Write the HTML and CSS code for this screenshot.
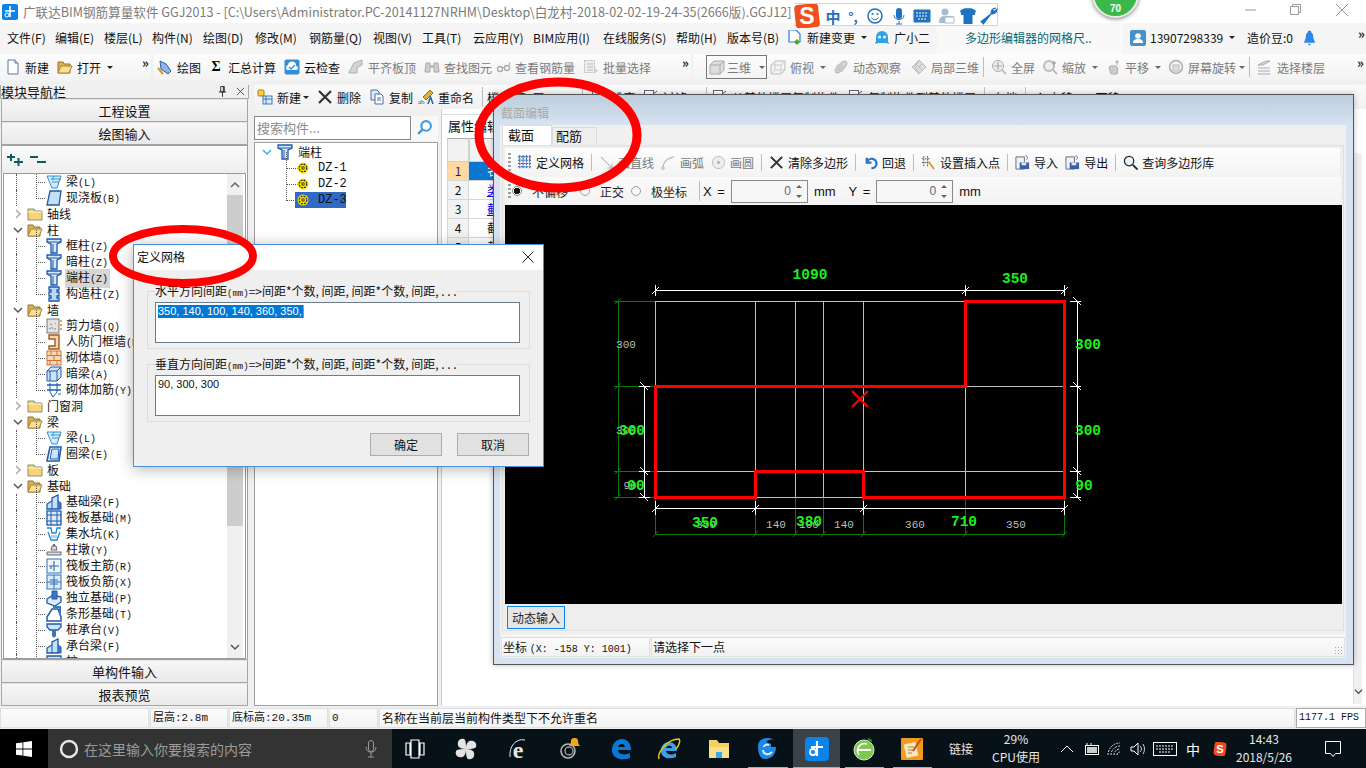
FILE: index.html
```html
<!DOCTYPE html>
<html lang="zh-CN">
<head>
<meta charset="utf-8">
<title>广联达BIM钢筋算量软件 GGJ2013</title>
<link rel="stylesheet" href="styles.css">
</head>
<body>
<svg class="sprite" aria-hidden="true">
  <symbol id="doc" viewBox="0 0 16 16"><path d="M3 1h7l3 3v11H3z" fill="#fff" stroke="#5a7796"/><path d="M10 1v3h3" fill="#dbe6f2" stroke="#5a7796"/></symbol>
  <symbol id="open" viewBox="0 0 16 16"><path d="M1 3h5l1 2h6v9H1z" fill="#d9b04d" stroke="#8f7430"/><path d="M4 7h11l-3 7H1z" fill="#f9df8e" stroke="#a58632"/></symbol>
  <symbol id="closed" viewBox="0 0 16 16"><path d="M1 3h6l1 2h7v9H1z" fill="#f5d576" stroke="#8c8a7c"/><path d="M1 6h14" stroke="#fff3c4"/></symbol>
  <symbol id="draw" viewBox="0 0 16 16"><path d="M3 2l6 3 5 7-3 3-7-5z" fill="#8fb6e6" stroke="#2a5da8"/><path d="M1 9l5 6" stroke="#d89a20" stroke-width="2"/></symbol>
  <symbol id="cloud" viewBox="0 0 16 16"><rect x=".5" y=".5" width="15" height="15" rx="2" fill="#2f8fd8"/><path d="M3 11a3 3 0 0 1 1-5 4 4 0 0 1 8 1 2 2 0 0 1 0 4z" fill="#fff"/><path d="M5 8l2 2 4-4" stroke="#2f8fd8" stroke-width="1.4" fill="none"/></symbol>
  <symbol id="g-align" viewBox="0 0 16 16"><path d="M1 13l5-9 8-3v5l-5 3v5H1z" fill="#d4d4d4" stroke="#b0b0b0"/></symbol>
  <symbol id="g-bino" viewBox="0 0 16 16"><path d="M2 4h4v9H1zM10 4h4l1 9h-5z" fill="#cfcfcf" stroke="#aaa"/><path d="M6 6h4v3H6z" fill="#bbb"/></symbol>
  <symbol id="g-glass" viewBox="0 0 16 16"><circle cx="5" cy="10" r="2.5" fill="none" stroke="#aaa" stroke-width="1.4"/><circle cx="12" cy="9" r="2.5" fill="none" stroke="#aaa" stroke-width="1.4"/><path d="M7 9l3-1M14 7l1-4" stroke="#aaa"/></symbol>
  <symbol id="g-select" viewBox="0 0 16 16"><rect x="1.500" y="1.500" width="10" height="12" fill="#eee" stroke="#bbb" stroke-dasharray="2 1"/><path d="M4 5h6M4 8h6M4 11h6" stroke="#bbb"/><path d="M11 8l4 4-2 1-1 2z" fill="#ccc"/></symbol>
  <symbol id="g-cube" viewBox="0 0 16 16"><path d="M1 6l4-4h10v9l-4 4H1z" fill="#ddd" stroke="#aaa"/><path d="M1 6h10v9M11 6l4-4" fill="none" stroke="#aaa"/></symbol>
  <symbol id="g-cube2" viewBox="0 0 16 16"><path d="M1 6l4-4h10v9l-4 4H1z" fill="#f4f4f4" stroke="#bbb"/><path d="M1 6h10v9M11 6l4-4M1 15l4-4h10M5 2v9" fill="none" stroke="#ccc"/></symbol>
  <symbol id="g-orbit" viewBox="0 0 16 16"><ellipse cx="8" cy="8" rx="7.500" ry="3" transform="rotate(-45 8 8)" fill="#d8d8d8" stroke="#bbb"/><circle cx="7" cy="9" r="4" fill="#c8c8c8"/></symbol>
  <symbol id="g-local" viewBox="0 0 16 16"><path d="M8 1l7 7-7 7-7-7z" fill="#ddd" stroke="#bbb"/><path d="M4 4l8 8M8 1l-4 7 4 7M12 4L8 8" stroke="#bbb" fill="none"/></symbol>
  <symbol id="g-full" viewBox="0 0 16 16"><circle cx="7" cy="7" r="5.500" fill="#eee" stroke="#aaa"/><path d="M7 3v8M3 7h8M11 11l4 4" stroke="#aaa" stroke-width="1.200"/></symbol>
  <symbol id="g-zoom" viewBox="0 0 16 16"><circle cx="7" cy="7" r="5" fill="#eee" stroke="#bbb" stroke-width="2"/><path d="M11 11l4 4M12 2v4M10 4h4" stroke="#aaa" stroke-width="1.500"/></symbol>
  <symbol id="g-pan" viewBox="0 0 16 16"><path d="M4 8l2-1 5 0 2 3-1 5H6z" fill="#ccc" stroke="#aaa"/><path d="M12 1v5M10 3h4" stroke="#aaa"/></symbol>
  <symbol id="g-rot" viewBox="0 0 16 16"><circle cx="8" cy="8" r="6.500" fill="#f2f2f2" stroke="#aaa" stroke-width="1.400"/><rect x="5" y="6" width="6" height="6" fill="#ddd" stroke="#bbb"/></symbol>
  <symbol id="g-floor" viewBox="0 0 16 16"><path d="M1 6l8-4h4L6 6zM1 9h12M1 12h12M1 15h12" fill="#ddd" stroke="#aaa"/></symbol>
  <symbol id="new2" viewBox="0 0 16 16"><rect x="1" y="1" width="6" height="6" rx="1" fill="#f7d03c" stroke="#a08018"/><rect x="6" y="7" width="9" height="8" fill="#dbe9f8" stroke="#3f78b8"/><path d="M6 10h9M9 7v8" stroke="#3f78b8"/></symbol>
  <symbol id="x" viewBox="0 0 16 16"><path d="M2 2l12 12M14 2L2 14" stroke="#333" stroke-width="2.200"/></symbol>
  <symbol id="copy" viewBox="0 0 16 16"><path d="M2 1h6l2 2v8H2z" fill="#dfe9f5" stroke="#4a6f9c"/><path d="M6 5h6l2 2v8H6z" fill="#fff" stroke="#4a6f9c"/><path d="M8 9h4M8 11h4" stroke="#4a6f9c"/></symbol>
  <symbol id="ren" viewBox="0 0 16 16"><path d="M5 8l7-7 3 3-7 7z" fill="#d8b23c" stroke="#8a7020"/><text x="0" y="15" font-size="7" font-family="Liberation Serif" fill="#444">ab</text><path d="M10 15l2.500-7 2.500 7" stroke="#2a5da8" fill="none" stroke-width="1.500"/></symbol>
  <symbol id="copyto" viewBox="0 0 16 16"><rect x="1.500" y="1.500" width="9" height="12" fill="#fff" stroke="#667"/><path d="M9 6l5-4M11 8l4-2" stroke="#2a5da8"/></symbol>
  <symbol id="newchg" viewBox="0 0 16 16"><path d="M2 0h7l4 4v8H2z" fill="#fff" stroke="#2f7fcf" stroke-width="1.200"/><path d="M10 9l3 3-3 3-3-3z" fill="#5aa02c"/></symbol>
  <symbol id="robot" viewBox="0 0 16 16"><path d="M2 7a6 6 0 0 1 12 0v4l1 3-3-1H4l-3 1 1-3z" fill="#2aa3e8"/><circle cx="5.500" cy="7" r="1.500" fill="#fff"/><circle cx="10.500" cy="7" r="1.500" fill="#fff"/></symbol>
  <symbol id="user" viewBox="0 0 16 16"><rect width="16" height="16" rx="2" fill="#4a90c8"/><circle cx="8" cy="6" r="2.800" fill="#fff"/><path d="M3 13c0-3 2-4 5-4s5 1 5 4z" fill="#fff"/></symbol>
  <symbol id="bell" viewBox="0 0 16 16"><path d="M8 0a2 2 0 0 1 2 2c2 1 2 4 2 6l2 5H2l2-5c0-2 0-5 2-6a2 2 0 0 1 2-2zM6 14h4l-2 2z" fill="#2f86e8"/></symbol>
  <symbol id="col" viewBox="0 0 16 16"><path d="M1 1h14v3l-4 2v9H5V6L1 4z" fill="#d5e8fa" stroke="#1c5ab0" stroke-width="1.300"/><path d="M1 4h14M7 6v9" stroke="#1c5ab0"/></symbol>
  <symbol id="beam" viewBox="0 0 16 16"><path d="M1 2l5 12h5l4-12z" fill="#d5ebfb" stroke="#2f8fd8"/><path d="M5 5h10M6 8h7M8 2l-2 4" stroke="#2f8fd8"/></symbol>
  <symbol id="slab" viewBox="0 0 16 16"><path d="M4 1h11l-2 14H1z" fill="#c5dff7" stroke="#1c5ab0" stroke-width="1.300"/></symbol>
  <symbol id="ringb" viewBox="0 0 16 16"><path d="M4 1h11l-2 14H1z" fill="#fff" stroke="#1c5ab0" stroke-width="1.600"/><path d="M6 3h7l-1 10H4z" fill="#cfe4f8" stroke="#1c5ab0"/></symbol>
  <symbol id="puzzle" viewBox="0 0 16 16"><path d="M3 1h10v3h-2v2h2v4h-2v2h2v3H3v-3h2v-2H3V6h2V4H3z" fill="#bcd7f4" stroke="#1c5ab0" stroke-width="1.300"/></symbol>
  <symbol id="shear" viewBox="0 0 16 16"><rect x="1" y="1" width="12" height="14" fill="#e2e2e2" stroke="#777"/><path d="M3 11l2-1M6 9l1 2M8 12l2-2M4 6l2 1M9 5l1 1" stroke="#888"/><path d="M14 3h2M14 7h2M14 11h2" stroke="#e08020" stroke-width="1.500"/></symbol>
  <symbol id="door" viewBox="0 0 16 16"><path d="M3 1h10v14H3v-3h6V5H3z" fill="#f6d7b0" stroke="#a35a20" stroke-width="1.400"/></symbol>
  <symbol id="brick" viewBox="0 0 16 16"><rect x="1" y="1" width="14" height="14" fill="#f8d8b8" stroke="#c8763a"/><path d="M1 5.500h14M1 10.500h14M5 1v4.500M11 1v4.500M8 5.500v5M4 10.500V15M11 10.500V15" stroke="#c8763a"/></symbol>
  <symbol id="dbeam" viewBox="0 0 16 16"><path d="M1 5l4-4h10v10l-4 4H1z" fill="#cfe3f7" stroke="#1c5ab0"/><path d="M1 5h10v10M11 5l4-4M4 5v10" fill="none" stroke="#1c5ab0"/></symbol>
  <symbol id="rebar" viewBox="0 0 16 16"><path d="M1 3h14M1 8h14" stroke="#1c5ab0" stroke-width="1.400"/><path d="M4 1v9l3 5M11 1v9l-4 5" stroke="#1c5ab0" fill="none"/><path d="M12 12h3" stroke="#1c5ab0"/></symbol>
  <symbol id="fbeam" viewBox="0 0 16 16"><path d="M1 15V10l5-3V4l6-3v14z" fill="#c5dff7" stroke="#1c5ab0" stroke-width="1.300"/><path d="M6 7v8M12 7l3 2v6h-3" fill="#3f78b8" stroke="#1c5ab0"/></symbol>
  <symbol id="raft" viewBox="0 0 16 16"><rect x="1" y="1" width="14" height="14" fill="#dcebfa" stroke="#1c5ab0" stroke-width="1.300"/><path d="M1 5h14M1 11h14M5 1v14M11 1v14" stroke="#1c5ab0"/></symbol>
  <symbol id="pit" viewBox="0 0 16 16"><path d="M1 2h4l1 5h4l1-5h4M2 6l3 8h6l3-8" fill="none" stroke="#1c8ad8" stroke-width="1.300"/><path d="M5 9h6v3H5z" fill="#a8d4f4"/></symbol>
  <symbol id="pier" viewBox="0 0 16 16"><path d="M6 4h4l1 4H5zM1 10h14v3H1z" fill="#ddd" stroke="#667"/><path d="M7 2h2v2H7z" fill="#667"/></symbol>
  <symbol id="rbar1" viewBox="0 0 16 16"><rect x="1" y="1" width="14" height="14" fill="#f0f6fc" stroke="#2f6fb8"/><path d="M8 3v10M3 8h10M5 11V8" stroke="#2f6fb8" stroke-width="1.200" fill="none"/></symbol>
  <symbol id="rbar2" viewBox="0 0 16 16"><rect x="1" y="1" width="14" height="14" fill="#dcebfa" stroke="#2f6fb8"/><path d="M1 8h14M8 1v14M4 6h8M4 10h8" stroke="#2f6fb8"/></symbol>
  <symbol id="iso" viewBox="0 0 16 16"><path d="M1 9l6-4 8 2v5l-6 4-8-3z" fill="#dcebfa" stroke="#1c5ab0" stroke-width="1.300"/><path d="M6 1h5v8H6z" fill="#3f78b8" stroke="#1c5ab0"/></symbol>
  <symbol id="strip" viewBox="0 0 16 16"><path d="M1 15v-4l5-8h6l3 8v4z" fill="#fff" stroke="#1c5ab0" stroke-width="1.500"/><path d="M7 1h7v8" fill="none" stroke="#3f78b8" stroke-width="2"/></symbol>
  <symbol id="cap" viewBox="0 0 16 16"><path d="M1 2h14v3l-3 3H4L1 5z" fill="#cfe3f7" stroke="#1c5ab0" stroke-width="1.300"/><path d="M6 8h4v6l-2 2-2-2z" fill="#3f78b8"/></symbol>
  <symbol id="gear" viewBox="0 0 12 12"><circle cx="6" cy="6" r="5.500" fill="#ffe800"/><circle cx="6" cy="6" r="3.800" fill="none" stroke="#333" stroke-width="1.300" stroke-dasharray="2 1"/><circle cx="6" cy="6" r="1.800" fill="#333"/><circle cx="6" cy="6" r=".8" fill="#ffe800"/></symbol>
  <symbol id="grid" viewBox="0 0 16 16"><path d="M1 2h14M1 5.500h14M1 9h14M1 12.500h14M3 0v15M6.500 0v15M10 0v15M13.500 0v15" stroke="#2a5bb0" stroke-width="1.100" stroke-dasharray="2 1"/></symbol>
  <symbol id="gline" viewBox="0 0 16 16"><path d="M2 2l12 12M14 9v5H9" fill="none" stroke="#bbb" stroke-width="1.300"/></symbol>
  <symbol id="garc" viewBox="0 0 16 16"><path d="M2 13C3 6 8 3 14 2" fill="none" stroke="#bbb" stroke-width="1.300"/><circle cx="2" cy="14" r="1.500" fill="#ddd" stroke="#bbb"/></symbol>
  <symbol id="gcirc" viewBox="0 0 16 16"><circle cx="8" cy="8" r="6.500" fill="#eee" stroke="#bbb"/><circle cx="8" cy="8" r="1.500" fill="#aaa"/></symbol>
  <symbol id="undo" viewBox="0 0 16 16"><path d="M4 3v5h5M4.500 8A5 5 0 1 1 9 14" fill="none" stroke="#2a72c8" stroke-width="2.400"/></symbol>
  <symbol id="insert" viewBox="0 0 16 16"><path d="M1 4h9M1 8h9M3 1v11M7 1v11" stroke="#555" stroke-dasharray="2 1"/><path d="M8 7l6 8" stroke="#d8a030" stroke-width="2"/></symbol>
  <symbol id="imp" viewBox="0 0 16 16"><path d="M1 2h9v13H1z" fill="#eef3fa" stroke="#667"/><rect x="5" y="8" width="10" height="7" fill="#3c5da8"/><rect x="7" y="8" width="5" height="3" fill="#dfe8f5"/><path d="M11 1c3 0 3 3 1 4" fill="none" stroke="#4a6f9c"/></symbol>
  <symbol id="search" viewBox="0 0 16 16"><circle cx="6.500" cy="6.500" r="5" fill="#eaf5fc" stroke="#222" stroke-width="1.300"/><path d="M10.500 10.500l5 5" stroke="#222" stroke-width="2"/></symbol>
  <symbol id="plusm" viewBox="0 0 18 14"><path d="M1 4h8M5 1v7M8 9h9M12.500 5v8" stroke="#0f5c5c" stroke-width="2"/></symbol>
  <symbol id="minusm" viewBox="0 0 18 14"><path d="M1 4h8M8 9h9" stroke="#0f5c5c" stroke-width="2"/></symbol>
  <symbol id="chevr" viewBox="0 0 10 10"><path d="M3 1l4 4-4 4" fill="none" stroke="#aaa" stroke-width="1.500"/></symbol>
  <symbol id="chevd" viewBox="0 0 10 10"><path d="M1 3l4 4 4-4" fill="none" stroke="#555" stroke-width="1.500"/></symbol>
  <symbol id="chevdb" viewBox="0 0 10 10"><path d="M1 3l4 4 4-4" fill="none" stroke="#2ab4f0" stroke-width="1.500"/></symbol>
  <symbol id="chevu" viewBox="0 0 10 10"><path d="M1 7l4-4 4 4" fill="none" stroke="#666" stroke-width="1.500"/></symbol>
</svg>

<div class="app">
  <header class="title">
    <svg class="appicon" viewBox="0 0 16 16"><rect width="16" height="16" rx="2" fill="#0a84e8"/><path d="M8 2v11M3 7h10" stroke="#fff" stroke-width="1.600"/><circle cx="5" cy="11" r="2" fill="none" stroke="#fff"/></svg>
    <span class="title-text">广联达BIM钢筋算量软件 GGJ2013 - [C:\Users\Administrator.PC-20141127NRHM\Desktop\白龙村-2018-02-02-19-24-35(2666版).GGJ12]</span>
    <svg class="winctl" viewBox="0 0 120 14"><path d="M0 7h11" stroke="#9a9a9a"/><path d="M45.500 3.500h8v8h-8zM47.500 3.500v-2h8v8h-2" fill="none" stroke="#9a9a9a"/><path d="M91 1l12 12M103 1L91 13" stroke="#9a9a9a"/></svg>
  </header>

  <nav class="menu">
    <span>文件(F)</span><span>编辑(E)</span><span>楼层(L)</span><span>构件(N)</span><span>绘图(D)</span><span>修改(M)</span><span>钢筋量(Q)</span><span>视图(V)</span><span>工具(T)</span><span>云应用(Y)</span><span>BIM应用(I)</span><span>在线服务(S)</span><span>帮助(H)</span><span>版本号(B)</span>
    <span class="mi"><svg class="i"><use href="#newchg"/></svg>新建变更<b class="caret"></b></span>
    <span class="mi"><svg class="i"><use href="#robot"/></svg>广小二</span>
    <span class="hint">多边形编辑器的网格尺..</span>
    <span class="mi phone"><svg class="i"><use href="#user"/></svg>13907298339<b class="caret"></b></span>
    <span class="mi"><span>造价豆:0</span><svg class="i bell"><use href="#bell"/></svg></span>
    <span class="more">»</span>
  </nav>

  <div class="tools">
    <div class="tgroup g1">
      <span class="it"><svg class="i"><use href="#doc"/></svg>新建</span>
      <span class="it"><svg class="i"><use href="#open"/></svg>打开<b class="caret"></b></span>
      <span class="more push">»</span>
    </div>
    <div class="tgroup g2">
      <span class="it"><svg class="i"><use href="#draw"/></svg>绘图</span>
      <span class="it"><b class="sigma">Σ</b>汇总计算</span>
      <span class="it"><svg class="i"><use href="#cloud"/></svg>云检查</span>
      <span class="it dim"><svg class="i"><use href="#g-align"/></svg>平齐板顶</span>
      <span class="it dim"><svg class="i"><use href="#g-bino"/></svg>查找图元</span>
      <span class="it dim lift"><svg class="i"><use href="#g-glass"/></svg>查看钢筋量</span>
      <span class="it dim"><svg class="i"><use href="#g-select"/></svg>批量选择</span>
      <span class="more push">»</span>
    </div>
    <div class="tgroup g3">
      <span class="it dim box3d"><svg class="i"><use href="#g-cube"/></svg>三维<b class="caret"></b></span>
      <span class="it dim"><svg class="i"><use href="#g-cube2"/></svg>俯视<b class="caret"></b></span>
      <span class="it dim"><svg class="i"><use href="#g-orbit"/></svg>动态观察</span>
      <span class="it dim nudge"><svg class="i"><use href="#g-local"/></svg>局部三维</span>
      <i class="sep"></i>
      <span class="it dim"><svg class="i"><use href="#g-full"/></svg>全屏</span>
      <span class="it dim"><svg class="i"><use href="#g-zoom"/></svg>缩放<b class="caret"></b></span>
      <span class="it dim"><svg class="i"><use href="#g-pan"/></svg>平移<b class="caret"></b></span>
      <span class="it dim"><svg class="i"><use href="#g-rot"/></svg>屏幕旋转<b class="caret tight"></b></span>
      <i class="sep"></i>
      <span class="it dim"><svg class="i"><use href="#g-floor"/></svg>选择楼层</span>
      <span class="more push">»</span>
    </div>
  </div>

  <main class="work">
    <aside class="nav">
      <div class="nav-head"><span>模块导航栏</span>
        <svg class="pin" viewBox="0 0 10 12"><path d="M3 .5h4v6H3zM1 6.500h8M5 7v5M6 1v5" fill="none" stroke="#222"/></svg>
        <svg class="nav-x" viewBox="0 0 10 10"><path d="M1 1l8 8M9 1L1 9" stroke="#444"/></svg>
      </div>
      <div class="navbtn">工程设置</div>
      <div class="navbtn">绘图输入</div>
      <div class="treewrap">
        <div class="treetool"><svg class="pm"><use href="#plusm"/></svg><svg class="pm"><use href="#minusm"/></svg></div>
        <div class="tree">
          <div class="treerows">
            <div class="row c"><svg class="i"><use href="#beam"/></svg><span>梁<i>(L)</i></span></div>
            <div class="row c last"><svg class="i"><use href="#slab"/></svg><span>现浇板<i>(B)</i></span></div>
            <div class="row f"><svg class="ch"><use href="#chevr"/></svg><svg class="i"><use href="#closed"/></svg><span>轴线</span></div>
            <div class="row f"><svg class="ch"><use href="#chevd"/></svg><svg class="i"><use href="#open"/></svg><span>柱</span></div>
            <div class="row c"><svg class="i"><use href="#col"/></svg><span>框柱<i>(Z)</i></span></div>
            <div class="row c"><svg class="i"><use href="#col"/></svg><span>暗柱<i>(Z)</i></span></div>
            <div class="row c"><svg class="i"><use href="#col"/></svg><span class="sel">端柱<i>(Z)</i></span></div>
            <div class="row c last"><svg class="i"><use href="#puzzle"/></svg><span>构造柱<i>(Z)</i></span></div>
            <div class="row f"><svg class="ch"><use href="#chevd"/></svg><svg class="i"><use href="#open"/></svg><span>墙</span></div>
            <div class="row c"><svg class="i"><use href="#shear"/></svg><span>剪力墙<i>(Q)</i></span></div>
            <div class="row c"><svg class="i"><use href="#door"/></svg><span>人防门框墙<i>(R)</i></span></div>
            <div class="row c"><svg class="i"><use href="#brick"/></svg><span>砌体墙<i>(Q)</i></span></div>
            <div class="row c"><svg class="i"><use href="#dbeam"/></svg><span>暗梁<i>(A)</i></span></div>
            <div class="row c last"><svg class="i"><use href="#rebar"/></svg><span>砌体加筋<i>(Y)</i></span></div>
            <div class="row f"><svg class="ch"><use href="#chevr"/></svg><svg class="i"><use href="#closed"/></svg><span>门窗洞</span></div>
            <div class="row f"><svg class="ch"><use href="#chevd"/></svg><svg class="i"><use href="#open"/></svg><span>梁</span></div>
            <div class="row c"><svg class="i"><use href="#beam"/></svg><span>梁<i>(L)</i></span></div>
            <div class="row c last"><svg class="i"><use href="#ringb"/></svg><span>圈梁<i>(E)</i></span></div>
            <div class="row f"><svg class="ch"><use href="#chevr"/></svg><svg class="i"><use href="#closed"/></svg><span>板</span></div>
            <div class="row f"><svg class="ch"><use href="#chevd"/></svg><svg class="i"><use href="#open"/></svg><span>基础</span></div>
            <div class="row c"><svg class="i"><use href="#fbeam"/></svg><span>基础梁<i>(F)</i></span></div>
            <div class="row c"><svg class="i"><use href="#raft"/></svg><span>筏板基础<i>(M)</i></span></div>
            <div class="row c"><svg class="i"><use href="#pit"/></svg><span>集水坑<i>(K)</i></span></div>
            <div class="row c"><svg class="i"><use href="#pier"/></svg><span>柱墩<i>(Y)</i></span></div>
            <div class="row c"><svg class="i"><use href="#rbar1"/></svg><span>筏板主筋<i>(R)</i></span></div>
            <div class="row c"><svg class="i"><use href="#rbar2"/></svg><span>筏板负筋<i>(X)</i></span></div>
            <div class="row c"><svg class="i"><use href="#iso"/></svg><span>独立基础<i>(P)</i></span></div>
            <div class="row c"><svg class="i"><use href="#strip"/></svg><span>条形基础<i>(T)</i></span></div>
            <div class="row c"><svg class="i"><use href="#cap"/></svg><span>桩承台<i>(V)</i></span></div>
            <div class="row c"><svg class="i"><use href="#fbeam"/></svg><span>承台梁<i>(F)</i></span></div>
            <div class="row c"><svg class="i"><use href="#cap"/></svg><span>桩<i>(U)</i></span></div>
          </div>
          <div class="vscroll">
            <svg class="ar"><use href="#chevu"/></svg>
            <div class="vtrack"><div class="vthumb"></div></div>
            <svg class="ar"><use href="#chevd"/></svg>
          </div>
        </div>
      </div>
      <div class="navbtn">单构件输入</div>
      <div class="navbtn">报表预览</div>
    </aside>

    <div class="pane">
      <div class="ctool">
        <span class="it"><svg class="i"><use href="#new2"/></svg>新建<b class="caret"></b></span>
        <span class="it"><svg class="i"><use href="#x"/></svg>删除</span>
        <span class="it"><svg class="i"><use href="#copy"/></svg>复制</span>
        <span class="it rename"><svg class="i"><use href="#ren"/></svg>重命名</span>
        <i class="sep"></i>
        <span class="it floor">楼层 第2层</span>
        <i class="sep"></i>
        <span class="it"><svg class="i"><use href="#copyto"/></svg>排序</span>
        <span class="it"><svg class="i"><use href="#copyto"/></svg>过滤</span>
        <i class="sep later"></i>
        <span class="it"><svg class="i"><use href="#copyto"/></svg>从其他楼层复制构件</span>
        <span class="it"><svg class="i"><use href="#copyto"/></svg>复制构件到其他楼层</span>
        <i class="sep"></i>
        <span class="it">存档</span>
        <i class="sep"></i>
        <span class="it">▲ 上移</span>
        <span class="it">▼ 下移</span>
      </div>
      <div class="panes">
        <section class="mid">
          <div class="searchrow">
            <div class="searchbox">搜索构件...</div>
            <svg class="searchbtn" viewBox="0 0 16 16"><circle cx="9.500" cy="6.500" r="4.500" fill="#fff" stroke="#3f9be0" stroke-width="2"/><path d="M6 10l-4 4" stroke="#3f9be0" stroke-width="2.400"/></svg>
          </div>
          <div class="ctree">
            <div class="croot"><svg class="ch"><use href="#chevdb"/></svg><svg class="i"><use href="#col"/></svg><span>端柱</span></div>
            <div class="cnode"><svg class="gear"><use href="#gear"/></svg><span>DZ-1</span></div>
            <div class="cnode"><svg class="gear"><use href="#gear"/></svg><span>DZ-2</span></div>
            <div class="cnode on"><svg class="gear"><use href="#gear"/></svg><span>DZ-3</span></div>
          </div>
        </section>
        <section class="props">
          <div class="ptab">属性编辑</div>
          <div class="ptable">
            <div class="phead"><span></span><span></span></div>
            <div class="prow cur"><span>1</span><span>名称</span></div>
            <div class="prow link"><span>2</span><span>类别</span></div>
            <div class="prow link"><span>3</span><span>截面编辑</span></div>
            <div class="prow"><span>4</span><span>截面形状</span></div>
            <div class="prow"><span>5</span><span>截面宽</span></div>
          </div>
          <div class="pscroll"><svg class="ar"><use href="#chevd"/></svg></div>
        </section>
      </div>
    </div>
  </main>

  <footer class="status">
    <span class="s0"></span><span class="s1">层高:2.8m</span><span class="s2">底标高:20.35m</span><span class="s3">0</span><span class="s4">名称在当前层当前构件类型下不允许重名</span><span class="s5">1177.1 FPS</span>
  </footer>

  <div class="taskbar">
    <div class="start"><svg viewBox="0 0 16 16"><path d="M0 2.300l6.500-.9v6.200H0zM7.300 1.300L16 0v7.600H7.300zM0 8.400h6.500v6.200L0 13.700zM7.300 8.400H16V16l-8.700-1.200z" fill="#fff"/></svg></div>
    <div class="tsearch">
      <svg class="ring" viewBox="0 0 20 20"><circle cx="10" cy="10" r="8" fill="none" stroke="#e8e8e8" stroke-width="2.400"/></svg>
      <span>在这里输入你要搜索的内容</span>
      <svg class="tmic" viewBox="0 0 12 18"><rect x="3.500" y=".5" width="5" height="11" rx="2.500" fill="none" stroke="#999"/><path d="M1 7c0 7 10 7 10 0M6 13v4M3 17h6" fill="none" stroke="#999"/></svg>
    </div>
    <div class="apps">
      <span class="app-s"><svg viewBox="0 0 24 20"><path d="M8 1h8v18H8zM3 4h4v12H3zM17 4h4v12h-4z" fill="none" stroke="#fff" stroke-width="1.200"/></svg></span>
      <span class="app-s"><svg viewBox="0 0 24 24"><path d="M12 12C5 12 3 9 4 5s6-4 7-2 1 6 1 9zM12 12c0-7 3-9 7-8s4 6 2 7-6 1-9 1zM12 12c7 0 9 3 8 7s-6 4-7 2-1-6-1-9zM12 12c0 7-3 9-7 8s-4-6-2-7 6-1 9-1z" fill="#e4e4e4"/></svg></span>
      <span class="app-s"><svg viewBox="0 0 24 24"><text x="12" y="21" font-size="24" font-family="Liberation Serif" font-weight="700" text-anchor="middle" fill="#e6e6e6">e</text><path d="M19 3C10 1 3 9 4 20" fill="none" stroke="#e6e6e6"/></svg></span>
      <span class="app-s"><svg viewBox="0 0 24 24"><circle cx="10" cy="14" r="7" fill="none" stroke="#bbb" stroke-width="1.500"/><circle cx="11" cy="14" r="4" fill="none" stroke="#999" stroke-width="1.500"/><path d="M17 1a3 3 0 0 1 3 3c0 2 1 4 2 5h-11c1-1 2-3 2-5a3 3 0 0 1 3-3z" fill="#f0a818"/></svg></span>
      <span class="app-s"><svg viewBox="0 0 24 24"><path d="M3 13C3 6 8 2 13 2s9 4 9 11H9c0 4 6 6 12 3v5c-8 3-18 1-18-8zm6-3h7c0-4-6-4-7 0z" fill="#0a78d8"/></svg></span>
      <span class="app-s"><svg viewBox="0 0 24 24"><path d="M4 14C4 8 8 5 12 5s8 3 8 9H9c0 3 5 5 10 2v4c-7 3-15 1-15-6zm5-3h6c0-3-5-3-6 0z" fill="#3aa0e8"/><path d="M2 22C0 16 10 2 22 2c2 2-1 8-3 10" fill="none" stroke="#f0c020" stroke-width="1.500"/></svg></span>
      <span class="app-s run fold"><svg viewBox="0 0 24 24"><path d="M2 3h8l2 3h10v15H2z" fill="#f5d060"/><path d="M2 10h20v11H2z" fill="#f9e08c"/><path d="M9 21v-6h6v6z" fill="#3aa8e8"/></svg></span>
      <span class="app-s run gapp"><svg viewBox="0 0 24 24"><path d="M3 10C3 3 8 1 13 1c3 0 5 1 6 2-3-1-6 0-8 2l5 2v3h5c0 7-4 12-11 12-5 0-7-6-7-12z" fill="#1c88e8"/><path d="M9 10c0-2 3-3 5-2M8 13c0 4 5 6 9 2" stroke="#d8ecfc" stroke-width="2" fill="none"/></svg></span>
      <span class="app-s run cur"><svg viewBox="0 0 24 24"><rect width="24" height="24" rx="4" fill="#0a84e8"/><path d="M12 4v15M6 10h12" stroke="#fff" stroke-width="2.200"/><circle cx="8" cy="15" r="3" fill="none" stroke="#fff" stroke-width="1.800"/></svg></span>
      <span class="app-s run"><svg viewBox="0 0 24 24"><circle cx="12" cy="13" r="10" fill="#7ec850" stroke="#d8ecc8"/><path d="M5 13h14" stroke="#fff" stroke-width="2"/><path d="M7 18C3 12 8 5 15 7" fill="none" stroke="#fff" stroke-width="1.500"/><path d="M16 2l4 2" stroke="#3a7a20" stroke-width="2"/></svg></span>
      <span class="app-s run"><svg viewBox="0 0 24 24"><rect x="1" y="1" width="22" height="22" rx="1" fill="#f09a20"/><rect x="5" y="6" width="12" height="14" fill="#f8e8c0" transform="rotate(-12 11 13)"/><path d="M8 10h6M8 13h6M8 16h4" stroke="#b08030"/><path d="M21 2L13 14" stroke="#c8501c" stroke-width="2"/></svg></span>
    </div>
    <span class="tray-t link">链接</span>
    <span class="tray-t cpu"><span>29%</span><span>CPU使用</span></span>
    <div class="tray">
      <svg viewBox="0 0 14 14"><path d="M1 10l6-6 6 6" fill="none" stroke="#fff"/></svg>
      <svg viewBox="0 0 16 14"><rect x="1.500" y="3.500" width="13" height="9" fill="none" stroke="#fff"/><rect x="3" y="5" width="10" height="6" fill="#ccc"/><path d="M3 1v3M7 1v3" stroke="#fff"/></svg>
      <svg viewBox="0 0 16 14"><path d="M1 13a12 12 0 0 1 12-12M4 13a9 9 0 0 1 9-9M7 13a6 6 0 0 1 6-6M10 13a3 3 0 0 1 3-3" fill="none" stroke="#ddd" stroke-dasharray="2 1"/></svg>
      <svg viewBox="0 0 16 14"><path d="M1 5h3l4-4v12L4 9H1z" fill="none" stroke="#fff"/><path d="M10 4c2 2 2 4 0 6M13 2c2 3 2 7 0 10" fill="none" stroke="#ccc"/></svg>
      <svg class="kb" viewBox="0 0 24 14"><rect x=".5" y=".5" width="23" height="13" fill="none" stroke="#fff"/><path d="M3 4h18M3 7h18M6 10h12" stroke="#fff" stroke-dasharray="2 1"/></svg>
      <span class="ime">中</span>
      <svg viewBox="0 0 14 14"><rect x="1" y="0" width="12" height="14" rx="3" fill="#f04a20" transform="rotate(8 7 7)"/><text x="7" y="11" font-size="11" font-weight="700" font-family="Liberation Sans" text-anchor="middle" fill="#fff">S</text></svg>
    </div>
    <span class="tray-t clock"><span>14:43</span><span>2018/5/26</span></span>
    <svg class="notify" viewBox="0 0 18 18"><path d="M1.500 1.500h15v12h-5l-2.500 3-2.500-3h-5z" fill="none" stroke="#fff"/></svg>
  </div>

  <section class="editor">
    <div class="ed-title">截面编辑</div>
    <div class="ed-body">
      <div class="ed-tabs"><span class="tab on">截面</span><span class="tab">配筋</span></div>
      <div class="ed-pane">
        <div class="ed-tool">
          <b class="grip"></b>
          <span class="it"><svg class="i"><use href="#grid"/></svg>定义网格</span><i class="sep"></i>
          <span class="it dim"><svg class="i"><use href="#gline"/></svg>画直线</span>
          <span class="it dim"><svg class="i"><use href="#garc"/></svg>画弧</span>
          <span class="it dim"><svg class="i"><use href="#gcirc"/></svg>画圆</span><i class="sep"></i>
          <span class="it"><svg class="i"><use href="#x"/></svg>清除多边形</span><i class="sep"></i>
          <span class="it"><svg class="i"><use href="#undo"/></svg>回退</span><i class="sep"></i>
          <span class="it"><svg class="i"><use href="#insert"/></svg>设置插入点</span><i class="sep"></i>
          <span class="it"><svg class="i"><use href="#imp"/></svg>导入</span>
          <span class="it"><svg class="i"><use href="#imp"/></svg>导出</span><i class="sep"></i>
          <span class="it"><svg class="i"><use href="#search"/></svg>查询多边形库</span>
        </div>
        <div class="ed-coord">
          <b class="grip short"></b>
          <span class="rad on"></span><span class="rl first">不偏移</span>
          <span class="rad"></span><span class="rl">正交</span>
          <span class="rad"></span><span class="rl">极坐标</span>
          <i class="sep"></i>
          <span class="lbl">X =</span>
          <span class="num">0<b class="spin"></b></span>
          <span class="lbl mm">mm</span>
          <span class="lbl yy">Y =</span>
          <span class="num">0<b class="spin"></b></span>
          <span class="lbl mm">mm</span>
        </div>
        <svg class="canvas" viewBox="505 205 837 399">
          <g class="gridl">
            <path d="M655 301.500h410M655 386.500h410M655 471.500h410M655 497.500h410M655.500 301v197M755.500 301v197M795.500 301v197M823.500 301v197M863.500 301v197M965.500 301v197M1064.500 301v197"/>
          </g>
          <g class="dg">
            <path d="M618.500 301v197M614 301.500h41M614 386.500h41M614 471.500h41M614 497.500h41"/>
            <path d="M655.500 498v37M755.500 498v37M795.500 498v37M823.500 498v37M863.500 498v37M965.500 498v37M1064.500 498v37M655 534.500h410"/>
            <path d="M653 537l5-6M753 537l5-6M793 537l5-6M821 537l5-6M861 537l5-6M963 537l5-6M1062 537l5-6M615 304l6-6M615 389l6-6M615 474l6-6M615 500l6-6"/>
          </g>
          <g class="wh">
            <path d="M655 290.500h410M655.500 285v11M965.500 285v11M1064.500 285v11M652 294l7-7M962 294l7-7M1061 294l7-7"/>
            <path d="M655 508.500h410M655.500 501v14M755.500 501v14M863.500 501v14M1064.500 501v14M652 512l7-7M752 512l7-7M860 512l7-7M1061 512l7-7"/>
            <path d="M644.500 386v112M639 386.500h11M639 471.500h11M639 497.500h11M640 382l8 8M640 467l8 8M640 493l8 8"/>
            <path d="M1077.500 301v197M1070 301.500h11M1070 386.500h11M1070 471.500h11M1070 497.500h11M1073 297l8 8M1073 382l8 8M1073 467l8 8M1073 493l8 8"/>
          </g>
          <path class="poly" d="M965.500 386.500V301.500H1064.500V497.500H863.500V471.500H755.500V497.500H655.500V386.500Z"/>
          <path class="cross" d="M852 391l16 16M868 391l-16 16"/>
          <g class="gt">
            <text x="626" y="348">300</text><text x="626" y="434">300</text><text x="630" y="489">90</text>
            <text x="706" y="528">350</text><text x="776" y="528">140</text><text x="809" y="528">100</text><text x="844" y="528">140</text><text x="915" y="528">360</text><text x="1016" y="528">350</text>
          </g>
          <g class="lt">
            <text x="810" y="279">1090</text><text x="1015" y="283">350</text>
            <text x="1088" y="349">300</text><text x="1088" y="435">300</text><text x="1084" y="490">90</text>
            <text x="632" y="435">300</text><text x="636" y="490">90</text>
            <text x="705" y="527">350</text><text x="809" y="526">380</text><text x="964" y="526">710</text>
          </g>
        </svg>
        <div class="ed-dyn"><span class="dyn">动态输入</span></div>
      </div>
      <div class="ed-status"><span class="coord">坐标 <i>(X: -158 Y: 1001)</i></span><span class="tip">请选择下一点</span></div>
    </div>
  </section>

  <section class="dlg">
    <div class="dlg-title"><span>定义网格</span><svg viewBox="0 0 12 12"><path d="M.5.5l11 11M11.500.5l-11 11" stroke="#222"/></svg></div>
    <div class="dlg-body">
      <fieldset class="grp">
        <legend>水平方向间距<small>(mm)</small>=&gt;间距*个数, 间距, 间距*个数, 间距, . . .</legend>
        <div class="ta sel-ta"><span class="selt">350, 140, 100, 140, 360, 350,</span><b class="cur-o"></b></div>
      </fieldset>
      <fieldset class="grp">
        <legend>垂直方向间距<small>(mm)</small>=&gt;间距*个数, 间距, 间距*个数, 间距, . . .</legend>
        <div class="ta">90, 300, 300</div>
      </fieldset>
      <div class="dlg-btns"><span class="btn">确定</span><span class="btn">取消</span></div>
    </div>
  </section>

  <svg class="marks" viewBox="0 0 1366 768" aria-hidden="true">
    <ellipse cx="558" cy="135" rx="79" ry="53"/>
    <ellipse class="m2" cx="183" cy="256" rx="70" ry="27"/>
  </svg>

  <div class="score"><span>70</span></div>

  <div class="sogou">
    <svg class="sg-s" viewBox="0 0 26 24"><rect x="1" y="0" width="24" height="24" rx="4" fill="#f0501e" transform="rotate(-6 13 12)"/><text x="13" y="20" font-size="23" font-weight="700" font-family="Liberation Sans" text-anchor="middle" fill="#fff">S</text></svg>
    <span class="sg-z">中</span>
    <span class="sg-d">°,</span>
    <svg viewBox="0 0 16 18"><circle cx="8" cy="9" r="7" fill="none" stroke="#1e72c0" stroke-width="1.500"/><circle cx="5.500" cy="7" r="1" fill="#1e72c0"/><circle cx="10.500" cy="7" r="1" fill="#1e72c0"/><path d="M4.500 10.500c2 3 5 3 7 0" fill="none" stroke="#1e72c0"/></svg>
    <svg viewBox="0 0 12 18"><rect x="3" y="1" width="6" height="11" rx="3" fill="#1e72c0"/><path d="M1 8c0 6 10 6 10 0M6 14v3M3 17h6" fill="none" stroke="#1e72c0"/></svg>
    <svg viewBox="0 0 18 14"><rect x=".5" y=".5" width="17" height="13" rx="1" fill="#1e72c0"/><path d="M3 4h12M3 7h12M5 10h8" stroke="#fff" stroke-dasharray="2 1"/></svg>
    <svg viewBox="0 0 18 18"><circle cx="8" cy="5" r="3.500" fill="#a9bccd"/><path d="M2 15c0-5 3-6 6-6h8v7H2z" fill="#a9bccd"/><rect x="8" y="10" width="9" height="6" fill="#fff" stroke="#a9bccd"/></svg>
    <svg viewBox="0 0 16 16"><path d="M1 3l4-2h6l4 2-1 4h-2v8H4V7H2z" fill="#1e72c0"/></svg>
    <svg viewBox="0 0 16 16"><path d="M14 1a4 4 0 0 0-4 5L1 13l2 2 7-9a4 4 0 0 0 5-4l-2 2-2-1V2z" fill="#1e72c0" stroke="#1e72c0"/></svg>
  </div>
</div>
</body>
</html>
```

FILE: styles.css
```css
* { box-sizing: border-box; }
html, body { margin: 0; padding: 0; }
body { font-family: "Noto Sans CJK SC", "Liberation Sans", sans-serif; font-size: 12px; color: #111; }
.sprite { position: absolute; width: 0; height: 0; }
.i { width: 16px; height: 16px; flex: none; }
i { font-style: normal; }

.app { position: relative; width: 1366px; height: 768px; overflow: hidden; display: flex; flex-direction: column; background: #f0f0f0; }

/* title */
.title { height: 23px; background: #fff; display: flex; align-items: center; padding-left: 2px; flex: none; }
.appicon { width: 16px; height: 16px; flex: none; }
.title-text { margin-left: 5px; font-size: 12.600px; color: #7a7a7a; white-space: nowrap; width: 1220px; overflow: hidden; }
.winctl { width: 120px; height: 14px; position: absolute; left: 1245px; top: 3px; }

/* menu */
.menu { height: 31px; flex: none; background: #f5f5f5; padding: 0 0 2px 7px; display: grid; grid-template-columns: 48px 49px 48px 51px 52px 54px 64px 49px 51px 60px 70px 73px 51px 60px 87px 63px 186px 124px 111px 1fr; align-items: center; white-space: nowrap; }
.mi { display: flex; align-items: center; gap: 4px; }
.phone { padding-left: 7px; }
.hint { background: #f9f9f9; height: 31px; line-height: 29px; padding-left: 28px; color: #0a6670; margin-bottom: -2px; }
.caret { display: inline-block; border: 3px solid transparent; border-top: 3px solid #222; border-bottom-width: 0; margin-left: 2px; }
.caret.tight { margin-left: -1px; }
.bell { margin-left: 5px; width: 15px; height: 20px; }
.more { font-size: 13px; font-weight: 700; color: #222; line-height: 12px; }
.menu .more { justify-self: end; margin-right: 2px; margin-top: -8px; }

/* toolbars */
.tools { height: 27px; flex: none; display: flex; gap: 2px; align-items: stretch; }
.tgroup { display: flex; align-items: center; background: linear-gradient(#fcfcfc, #f3f3f3); gap: 8px; padding-right: 2px; padding-bottom: 1px; }
.g1 { width: 151px; flex: none; padding-left: 5px; }
.g2 { width: 538px; flex: none; padding-left: 4px; }
.g3 { flex: 1; min-width: 0; padding-left: 13px; gap: 7px; }
.g3 .sep { margin-left: -3px; }
.nudge { margin-left: 3px; }
.lift { margin-left: -5px; }
.it { display: inline-flex; align-items: center; gap: 4px; white-space: nowrap; }
.dim { color: #7a7a7a; }
.dim .caret { border-top-color: #666; }
.push { margin-left: auto; margin-top: -8px; }
.sigma { width: 14px; text-align: center; font-family: "Liberation Serif", serif; font-size: 14px; color: #000; margin-right: 1px; }
.box3d { border: 1px solid #777; height: 24px; width: 61px; padding-left: 2px; gap: 2px; margin-right: -4px; }
.box3d .caret { margin-left: 6px; }
.sep { display: block; width: 1px; height: 20px; background: #bdbdbd; flex: none; }

/* work */
.work { height: 625px; margin-top: 2px; flex: none; display: flex; background: #f0f0f0; }
.nav { width: 249px; flex: none; display: flex; flex-direction: column; padding-top: 2px; }
.nav-head { height: 14px; background: #f0f0f0; border: 1px solid #a8a8a8; border-top: 0; display: flex; align-items: center; font-size: 13px; line-height: 13px; position: relative; flex: none; }
.pin { position: absolute; left: 217px; top: 1px; width: 9px; height: 11px; }
.nav-x { position: absolute; left: 235px; top: 2px; width: 9px; height: 9px; }
.navbtn { height: 23px; margin: 0 1px; flex: none; border: 1px solid #a5a5a5; border-top-color: #e4e4e4; background: linear-gradient(#f6f6f6, #eaeaea); display: flex; align-items: center; justify-content: center; font-size: 13px; line-height: 20px; }
.treewrap { height: 515px; flex: none; border: 1px solid #a0a0a0; margin: 0 1px; display: flex; flex-direction: column; background: #fff; }
.treetool { height: 27px; flex: none; background: linear-gradient(#fbfbfb, #eee); display: flex; align-items: center; padding-left: 4px; gap: 5px; }
.pm { width: 18px; height: 14px; }
.tree { flex: 1; min-height: 0; display: flex; overflow: hidden; border: 1px solid #9a9a9a; margin: 0 1px; background: #fff; }
.treerows { flex: 1; min-width: 0; overflow: hidden; }
.row { position: relative; height: 16px; display: flex; align-items: center; white-space: nowrap; line-height: 16px; }
.row i, .cnode span, .coord i { font-family: "Liberation Mono", monospace; font-size: 10px; }
.row.c { padding-left: 42px; gap: 4px; }
.row.c::before { content: ""; position: absolute; left: 32px; top: -8px; width: 10px; height: 16px; border-left: 1px dotted #555; border-bottom: 1px dotted #555; }
.row.c::after { content: ""; position: absolute; left: 12px; top: 0; height: 16px; border-left: 1px dotted #555; }
.row.c .i { position: relative; z-index: 1; background: #fff; }
.row.f { padding-left: 9px; }
.row.f .i { margin-left: 4px; margin-right: 4px; }
.ch { width: 10px; height: 10px; flex: none; }
.sel { background: #d6d6d6; padding: 0 2px 0 1px; margin-left: -1px; }
.vscroll { width: 16px; margin-right: 2px; flex: none; background: #f0f0f0; display: flex; flex-direction: column; align-items: center; padding: 6px 0; }
.ar { width: 10px; height: 10px; flex: none; }
.vtrack { flex: 1; width: 100%; padding-top: 5px; }
.vthumb { height: 331px; background: #cdcdcd; }

.pane { flex: 1; min-width: 0; display: flex; flex-direction: column; padding-top: 2px; }
.ctool { height: 24px; flex: none; margin-left: 5px; background: linear-gradient(#fafafa, #f1f1f1); display: flex; align-items: center; gap: 8px; padding-left: 3px; overflow: hidden; white-space: nowrap; }
.ctool .caret { margin-left: -2px; }
.ctool .rename { margin-left: -3px; }
.floor { width: 87px; margin-left: -4px; }
.later { margin-left: 11px; margin-right: -3px; }
.panes { flex: 1; min-height: 0; display: flex; gap: 3px; padding-bottom: 2px; }
.mid { width: 184px; margin-left: 5px; flex: none; display: flex; flex-direction: column; padding-top: 7px; }
.searchrow { height: 25px; flex: none; display: flex; background: #f8f8f8; }
.searchbox { width: 157px; height: 24px; border: 1px solid #8a8a8a; background: #fff; font-size: 13px; color: #8a8a8a; padding-left: 2px; line-height: 21px; }
.searchbtn { width: 17px; height: 17px; margin: 3px 0 0 5px; }
.ctree { flex: 1; margin-top: 1px; border: 1px solid #a0a0a0; background: #fff; position: relative; }
.croot { height: 16px; display: flex; align-items: center; margin-top: 1px; padding-left: 7px; line-height: 16px; font-size: 12px; }
.croot .i { margin: 0 5px; }
.cnode { position: relative; height: 16px; padding-left: 42px; display: flex; align-items: center; }
.cnode::before { content: ""; position: absolute; left: 31px; top: -8px; width: 11px; height: 16px; border-left: 1px dotted #555; border-bottom: 1px dotted #555; }
.cnode .gear { width: 12px; height: 12px; position: relative; z-index: 1; }
.cnode span { font-size: 12px; margin-left: 9px; color: #111; }
.cnode.on::after { content: ""; position: absolute; left: 40px; top: 0; width: 51px; height: 16px; background: #316ac5; }
.cnode.on .gear, .cnode.on span { position: relative; z-index: 1; }

.props { flex: 1; min-width: 0; position: relative; background: #fff; border-left: 1px solid #cfcfcf; padding-top: 5px; }
.ptab { width: 80px; height: 22px; font-size: 13px; line-height: 21px; padding-left: 6px; background: #fff; border-top: 1px solid #ddd; }
.ptable { margin: 2px 0 0 5px; width: 400px; font-size: 12px; }
.phead { display: grid; grid-template-columns: 22px 1fr; height: 24px; background: #f2f2f2; }
.phead span { border: 1px solid #d0d0d0; border-top-color: #a8a8a8; }
.prow { display: grid; grid-template-columns: 22px 1fr; height: 19px; line-height: 18px; }
.prow span { border-right: 1px solid #d5d5d5; border-bottom: 1px solid #d5d5d5; white-space: nowrap; overflow: hidden; }
.prow span:first-child { text-align: center; background: #f2f2f2; border-left: 1px solid #d5d5d5; }
.prow span:last-child { padding-left: 18px; }
.prow.cur span:first-child { background: #ffd9a0; color: #2a1a7a; }
.prow.cur span:last-child { background: #0b76d0; color: #fff; }
.prow.link span:last-child { color: #0000ee; text-decoration: underline; }
.pscroll { position: absolute; right: 4px; top: 44px; bottom: 2px; width: 9px; background: #f0f0f0; border-left: 1px solid #e0e0e0; display: flex; align-items: flex-end; justify-content: center; padding-bottom: 8px; }
.pscroll .ar { width: 9px; height: 9px; }

/* status */
.status { height: 20px; flex: none; display: grid; grid-template-columns: 149px 78px 99px 49px 916px 1fr; gap: 1px; margin-bottom: 1px; background: #e8e8e8; }
.status span { background: linear-gradient(#fbfbfb, #f3f3f3); border: 1px solid #e0e0e0; line-height: 18px; padding-left: 2px; white-space: nowrap; overflow: hidden; }
.s1, .s2, .s3 { font-family: "Liberation Mono", "Noto Sans CJK SC", monospace; font-size: 11px; }
.status .s5 { font-family: "Liberation Mono", monospace; font-size: 10px; border-color: #aaa; background: #fff; }

/* taskbar */
.taskbar { height: 40px; flex: none; background: #071118; display: flex; align-items: center; color: #fff; position: relative; }
.start { width: 48px; height: 40px; background: #000; display: flex; align-items: center; justify-content: center; }
.start svg { width: 16px; height: 16px; }
.tsearch { width: 344px; height: 40px; background: #333; display: flex; align-items: center; color: #9b9b9b; font-size: 14px; padding-left: 11px; }
.ring { width: 20px; height: 20px; margin-right: 5px; }
.tmic { width: 12px; height: 18px; margin-left: auto; margin-right: 15px; }
.apps { display: grid; grid-template-columns: 50px 52px 52px 52px 50px 46px 54px 47px 47px 48px 48px; margin-left: -2px; height: 40px; }
.app-s { display: flex; align-items: center; justify-content: center; height: 40px; position: relative; }
.app-s svg { width: 24px; height: 24px; }
.app-s.run::after { content: ""; position: absolute; left: 5px; right: 4px; bottom: 0; height: 2px; background: #76b9ed; }
.app-s.fold::after { display: none; }
.app-s.gapp { padding-right: 5px; }
.app-s.gapp::after { left: 2px; right: 5px; }
.app-s.cur { background: #3a4247; }
.app-s.cur::after { left: 0; right: 0; }
.tray-t { position: absolute; display: flex; flex-direction: column; align-items: center; line-height: 18px; color: #e8e8e8; }
.link { left: 949px; top: 11px; }
.cpu { left: 989px; width: 54px; top: 1px; }
.tray { position: absolute; left: 1054px; top: 0; height: 40px; display: grid; grid-template-columns: 25px 25px 22px 24px 30px 26px 28px; align-items: center; justify-items: center; }
.tray svg { width: 16px; height: 14px; }
.tray .kb { width: 24px; }
.ime { font-size: 14px; }
.clock { left: 1234px; width: 60px; top: 1px; }
.notify { position: absolute; left: 1324px; top: 11px; width: 18px; height: 18px; }

/* editor window */
.editor { position: absolute; left: 493px; top: 94px; width: 861px; height: 571px; z-index: 1; border: 1px solid #555; background: #d7e3f1; box-shadow: 0 0 6px rgba(0,0,0,.25); display: flex; flex-direction: column; }
.ed-title { height: 30px; flex: none; background: linear-gradient(#bccddc, #d7e3f1); color: #a8a8a8; font-size: 12px; padding: 10px 0 0 7px; line-height: 16px; }
.ed-body { flex: 1; min-height: 0; margin: 0 7px 6px 6px; background: #f0f0f0; display: flex; flex-direction: column; }
.ed-tabs { height: 20px; flex: none; display: flex; align-items: flex-end; padding-left: 2px; }
.tab { width: 45px; height: 18px; background: #eee; border: 1px solid #dcdcdc; border-bottom: 0; padding-left: 3px; line-height: 16px; font-size: 13px; }
.tab.on { width: 50px; height: 20px; background: #fff; padding-left: 5px; line-height: 17px; }
.ed-pane { flex: none; height: 486px; margin: 0 2px; background: #eee; border: 1px solid #e0e0e0; padding: 2px 2px 0 2px; display: flex; flex-direction: column; }
.ed-tool { height: 29px; flex: none; background: linear-gradient(#fdfdfd, #f3f3f3); display: flex; align-items: center; gap: 7px; padding-left: 3px; margin-right: 1px; white-space: nowrap; }
.ed-tool .it { gap: 4px; }
.ed-tool .i { width: 15px; height: 15px; }
.ed-tool .sep { height: 17px; }
.grip { display: block; width: 3px; height: 20px; flex: none; margin-right: -1px; background: repeating-linear-gradient(#a0a0a0 0 2px, transparent 2px 4px); }
.grip.short { height: 14px; margin-right: 1px; }
.ed-coord { height: 28px; flex: none; background: linear-gradient(#fafafa, #f2f2f2); display: flex; align-items: center; padding-left: 3px; white-space: nowrap; }
.rad { width: 10px; height: 10px; border: 1px solid #a0a0a0; border-radius: 50%; background: #f8f8f8; flex: none; position: relative; }
.rad.on { border-color: #888; background: radial-gradient(circle, #111 0 3px, #fff 3.500px); }
.rl { margin-left: 10px; color: #222; }
.rl.first { margin-right: 5px; }
.ed-coord .rl + .rad { margin-left: 7px; }
.ed-coord .sep { margin: 0 3px 0 12px; height: 20px; }
.lbl { font-family: "Liberation Sans", sans-serif; font-size: 13px; word-spacing: 2px; }
.num { width: 77px; height: 23px; margin-left: 6px; border: 1px solid #8a8a8a; background: #f7f7f7; text-align: right; padding-right: 16px; line-height: 21px; font-family: "Liberation Sans", sans-serif; font-size: 12px; color: #666; position: relative; }
.spin { position: absolute; right: 4px; top: 4px; width: 7px; height: 13px; }
.spin::before { content: ""; position: absolute; left: 0; top: 0; border: 3px solid transparent; border-bottom-color: #666; border-top: 0; }
.spin::after { content: ""; position: absolute; left: 0; bottom: 0; border: 3px solid transparent; border-top-color: #666; border-bottom: 0; }
.mm { margin-left: 6px; }
.yy { margin-left: 13px; }
.canvas { display: block; width: 837px; height: 399px; flex: none; background: #000; }
.canvas path { fill: none; }
.gridl path { stroke: #c0c0c0; }
.dg path { stroke: #0a7a0a; }
.wh path { stroke: #fff; }
.poly { stroke: #f00; stroke-width: 3; stroke-linejoin: miter; }
.cross { stroke: #f00; stroke-width: 2.200; }
.gt text { font-family: "Liberation Mono", monospace; font-size: 11px; fill: #bdbdbd; text-anchor: middle; }
.lt text { font-family: "Liberation Mono", monospace; font-size: 14.500px; font-weight: 700; fill: #1cf01c; text-anchor: middle; }
.ed-dyn { height: 27px; flex: none; padding: 2px 0 0 2px; }
.dyn { display: block; width: 58px; height: 23px; border: 1px solid #0a84e8; background: #e6e6e6; text-align: center; line-height: 21px; color: #222; }
.ed-status { flex: 1; margin: 4px 1px 0; display: flex; gap: 1px; border-top: 1px solid #fff; padding-top: 1px; }
.ed-status span { border: 1px solid #e0e0e0; background: linear-gradient(#fbfbfb, #f2f2f2); padding-left: 1px; height: 20px; line-height: 18px; }
.coord { width: 149px; flex: none; white-space: nowrap; }
.coord i { font-size: 10px; }
.tip { flex: 1; position: relative; }
.tip::after { content: ""; position: absolute; right: 1px; bottom: 1px; width: 9px; height: 9px; background: radial-gradient(circle, #aaa 1px, transparent 1px) 0 0 / 3px 3px; }

/* dialog */
.dlg { position: absolute; left: 133px; top: 244px; width: 411px; height: 223px; z-index: 2; border: 1px solid #4a90d9; background: #efefef; box-shadow: 0 2px 14px rgba(0,0,0,.3); display: flex; flex-direction: column; }
.dlg-title { height: 25px; flex: none; background: #fff; display: flex; align-items: center; justify-content: space-between; padding: 0 9px 2px 3px; }
.dlg-title svg { width: 12px; height: 12px; }
.dlg-body { flex: 1; padding: 15px 13px 0; display: flex; flex-direction: column; gap: 9px; }
.grp { border: 1px solid #dcdcdc; margin: 0; padding: 0 9px 0 7px; height: 64px; min-width: 0; display: block; flex: none; }
.grp legend { padding: 0; margin: 0; line-height: 14px; height: 12px; font-size: 12px; white-space: nowrap; position: relative; top: -1px; }
.grp small { font-family: "Liberation Mono", monospace; font-size: 9px; }
.ta { height: 41px; border: 1px solid #6a7d8e; background: #fff; margin-top: 5px; padding: 2px; font-family: "Liberation Sans", sans-serif; font-size: 11px; line-height: 13px; position: relative; white-space: nowrap; }
.selt { background: #0078d7; color: #fff; padding: 0 1px 1px 0; }
.cur-o { display: inline-block; width: 1px; height: 13px; background: #f08020; vertical-align: top; }
.dlg-btns { display: flex; justify-content: flex-end; gap: 15px; margin-top: 2px; padding-right: 1px; }
.btn { width: 72px; height: 23px; border: 1px solid #adadad; background: #e1e1e1; text-align: center; line-height: 21px; }

/* overlays */
.marks { position: absolute; left: 0; top: 0; width: 1366px; height: 768px; z-index: 3; pointer-events: none; }
.marks ellipse { fill: none; stroke: #f00; stroke-width: 9; }
.marks .m2 { stroke-width: 8; }
.score { position: absolute; left: 1092px; top: -29px; width: 47px; height: 47px; border-radius: 50%; background: #3cb84a; border: 2px solid #e6ece6; box-shadow: 0 1px 4px rgba(0,0,0,.5); z-index: 4; color: #fff; font-family: "Liberation Sans", sans-serif; font-weight: 700; font-size: 10px; text-align: center; padding-top: 30px; line-height: 12px; }
.sogou { position: absolute; left: 794px; top: 3px; height: 23px; width: 204px; z-index: 4; display: grid; grid-template-columns: 28px 22px 18px 26px 22px 24px 24px 20px 22px; align-items: center; justify-items: center; background: linear-gradient(90deg, transparent 18px, #fff 18px); border: 1px solid #c5d9ee; border-left: 0; color: #1e72c0; }
.sogou svg { width: 18px; height: 18px; }
.sogou .sg-s { width: 26px; height: 24px; margin-left: -2px; }
.sg-z { font-size: 15px; font-weight: 700; }
.sg-d { font-size: 13px; font-weight: 700; }
```
